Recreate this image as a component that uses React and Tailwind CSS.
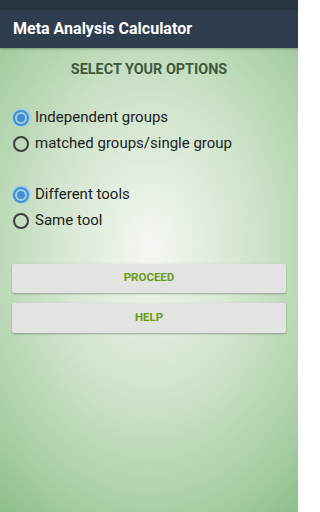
import React, { useState } from "react";

const GROUPS = ["Independent groups", "matched groups/single group"];
const TOOLS = ["Different tools", "Same tool"];

function Radio({ label, checked, onClick }) {
  return (
    <button
      type="button"
      onClick={onClick}
      className="flex items-center h-[26px] pl-[13px] text-left"
    >
      <span className="relative flex items-center justify-center w-[16px] h-[16px]">
        {checked && (
          <span className="absolute w-[19px] h-[19px] rounded-full bg-[#9fcbee]/70" />
        )}
        <span
          className={
            checked
              ? "relative w-[16px] h-[16px] rounded-full border-[2px] border-[#3d8fd6] flex items-center justify-center"
              : "relative w-[16px] h-[16px] rounded-full border-[2px] border-[#3e3e3e]"
          }
        >
          {checked && <span className="w-[8px] h-[8px] rounded-full bg-[#3d8fd6]" />}
        </span>
      </span>
      <span className="ml-[6px] text-[15px] text-[#1c1c1c] leading-none">{label}</span>
    </button>
  );
}

export default function App() {
  const [group, setGroup] = useState(0);
  const [tool, setTool] = useState(0);

  return (
    <div
      className="w-[298px] h-[512px] flex flex-col overflow-hidden bg-[radial-gradient(ellipse_300px_420px_at_150px_245px,#f5f8f3_0%,#d0e4cc_35%,#a8cea4_65%,#84bc83_85%,#6daa6d_100%)]"
      style={{ fontFamily: "Roboto, 'Liberation Sans', sans-serif" }}
    >
      {/* app bar */}
      <div className="bg-[#2f3e4f]">
        <div className="h-[10px] bg-[#28353f]" />
        <div className="h-[38px] flex items-center pl-[13px] shadow-[0_1px_2px_rgba(0,0,0,0.3)]">
          <h1 className="text-white font-bold text-[16px]">Meta Analysis Calculator</h1>
        </div>
      </div>

      <p className="mt-[11px] text-center font-bold text-[14.4px] text-[#3c5a3c]">
        SELECT YOUR OPTIONS
      </p>

      <div className="mt-[24px] flex flex-col">
        {GROUPS.map((g, i) => (
          <Radio key={g} label={g} checked={group === i} onClick={() => setGroup(i)} />
        ))}
      </div>

      <div className="mt-[25px] flex flex-col">
        {TOOLS.map((t, i) => (
          <Radio key={t} label={t} checked={tool === i} onClick={() => setTool(i)} />
        ))}
      </div>

      <div className="mt-[30px] px-[12px] flex flex-col gap-[10px]">
        <button className="h-[29px] bg-[#e2e4e2] shadow-[0_1px_2px_rgba(0,0,0,0.3)] rounded-[2px] text-[11.5px] font-bold text-[#6b9a1c]">
          PROCEED
        </button>
        <button className="h-[30px] bg-[#e2e4e2] shadow-[0_1px_2px_rgba(0,0,0,0.3)] rounded-[2px] text-[11.5px] font-bold text-[#6b9a1c]">
          HELP
        </button>
      </div>
    </div>
  );
}
